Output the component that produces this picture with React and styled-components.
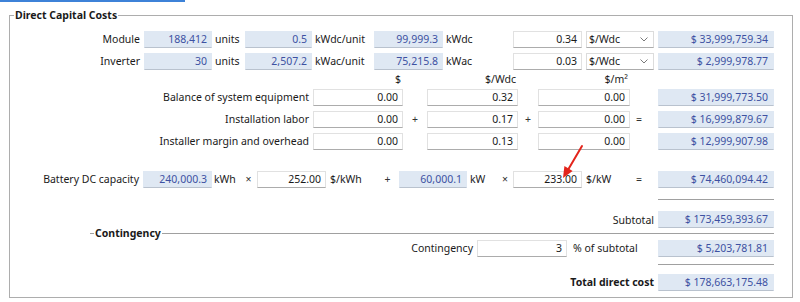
import React from 'react';
import styled, { createGlobalStyle } from 'styled-components';

const Global = createGlobalStyle`
  html, body { margin: 0; padding: 0; background: #fff; }
  body {
    width: 800px; height: 302px; overflow: hidden;
    font-family: "Noto Sans", "Open Sans", sans-serif;
    font-size: 10.5px; color: #1a1a1a;
  }
`;

const Page = styled.div`
  position: relative;
  width: 800px;
  height: 302px;
`;

const TabLine = styled.div`
  width: 185px;
  height: 2px;
  background: #3d82d8;
`;

const Group = styled.fieldset`
  margin: 5px 0 0 9px;
  width: 784px;
  box-sizing: border-box;
  border: 1px solid #adadad;
  padding: 5px 18px 4px 0;
  min-width: 0;
`;

const Legend = styled.legend`
  margin-left: 4px;
  padding: 0 1px;
  font-weight: 700;
  line-height: 16px;
`;

const Body = styled.div`
  display: flex;
  flex-direction: column;
`;

const Row = styled.div`
  display: flex;
  align-items: center;
  height: ${p => p.$h ?? 22}px;
  margin-top: ${p => p.$mt ?? 0}px;
  white-space: nowrap;
`;

const Label = styled.div`
  ${p => (p.$w ? `width: ${p.$w}px; flex: none;` : 'flex: 1;')}
  box-sizing: border-box;
  padding-right: 4px;
  text-align: right;
  font-weight: ${p => (p.$bold ? 700 : 400)};
`;

const Field = styled.div`
  flex: none;
  box-sizing: border-box;
  width: ${p => p.$w}px;
  height: 17px;
  display: flex;
  align-items: center;
  justify-content: flex-end;
  padding-right: 4px;
  line-height: 1;
`;

const Calc = styled(Field)`
  background: #dfe8f3;
  color: #3d51a2;
  border: 1px solid #dfe8f3;
  border-bottom-color: #b9c2ce;
`;

const Result = styled(Calc)`
  margin-left: auto;
  padding-right: 5px;
`;

const Input = styled(Field)`
  background: #fff;
  color: #1a1a1a;
  border: 1px solid #e1e1e1;
  border-bottom-color: #acacac;
`;

const Select = styled.div`
  flex: none;
  box-sizing: border-box;
  width: 68px;
  height: 17px;
  margin-left: 4px;
  display: flex;
  align-items: center;
  justify-content: space-between;
  padding: 0 5px 0 2px;
  background: #fff;
  border: 1px solid #dcdcdc;
  border-bottom-color: #acacac;
`;

const Unit = styled.div`
  flex: none;
  box-sizing: border-box;
  width: ${p => p.$w}px;
  padding-left: ${p => p.$pl ?? 3}px;
`;

const Op = styled.div`
  flex: none;
  width: ${p => p.$w}px;
  text-align: center;
  color: #333;
`;

const Head = styled.div`
  flex: none;
  box-sizing: border-box;
  width: ${p => p.$w}px;
  text-align: right;
  padding-right: 2px;
`;

const Rule = styled.div`
  width: 116px;
  margin-left: auto;
  margin-top: ${p => p.$mt ?? 0}px;
  border-top: 1px solid #a0a0a0;
`;

const SubHeader = styled.div`
  display: flex;
  align-items: center;
  height: 8px;
  margin-left: 80px;
  &::before { content: ''; width: 4px; border-top: 1px solid #a0a0a0; }
  &::after { content: ''; flex: 1; border-top: 1px solid #a0a0a0; }
`;

const SubTitle = styled.span`
  font-weight: 700;
  padding: 0 1px;
  line-height: 14px;
`;

const Arrow = styled.svg`
  position: absolute;
  left: 555px;
  top: 143px;
  overflow: visible;
`;

const Chevron = () => (
  <svg width="8" height="5" viewBox="0 0 8 5">
    <polyline points="0.5,0.5 4,4 7.5,0.5" fill="none" stroke="#7a7a7a" strokeWidth="1" />
  </svg>
);

const ModuleRow = ({ label, count, per, perUnit, total, totalUnit, price, amount }) => (
  <Row>
    <Label $w={134}>{label}</Label>
    <Calc $w={68}>{count}</Calc>
    <Unit $w={33}>units</Unit>
    <Calc $w={67}>{per}</Calc>
    <Unit $w={62}>{perUnit}</Unit>
    <Calc $w={69}>{total}</Calc>
    <Unit $w={70}>{totalUnit}</Unit>
    <Input $w={69}>{price}</Input>
    <Select>
      <span>$/Wdc</span>
      <Chevron />
    </Select>
    <Result $w={116}>{amount}</Result>
  </Row>
);

const BosRow = ({ label, a, b, c, amount, ops }) => (
  <Row>
    <Label $w={303}>{label}</Label>
    <Input $w={90}>{a}</Input>
    <Op $w={24}>{ops ? '+' : ''}</Op>
    <Input $w={91}>{b}</Input>
    <Op $w={20}>{ops ? '+' : ''}</Op>
    <Input $w={92}>{c}</Input>
    <Op $w={18}>{ops ? '=' : ''}</Op>
    <Result $w={116}>{amount}</Result>
  </Row>
);

export default function App() {
  return (
    <Page>
      <Global />
      <TabLine />
      <Group>
        <Legend>Direct Capital Costs</Legend>
        <Body>
          <ModuleRow label="Module" count="188,412" per="0.5" perUnit="kWdc/unit" total="99,999.3" totalUnit="kWdc" price="0.34" amount="$ 33,999,759.34" />
          <ModuleRow label="Inverter" count="30" per="2,507.2" perUnit="kWac/unit" total="75,215.8" totalUnit="kWac" price="0.03" amount="$ 2,999,978.77" />
          <Row $h={14}>
            <Label $w={303} />
            <Head $w={90}>$</Head>
            <Op $w={24} />
            <Head $w={91}>$/Wdc</Head>
            <Op $w={20} />
            <Head $w={92}>$/m²</Head>
          </Row>
          <BosRow label="Balance of system equipment" a="0.00" b="0.32" c="0.00" amount="$ 31,999,773.50" />
          <BosRow label="Installation labor" a="0.00" b="0.17" c="0.00" amount="$ 16,999,879.67" ops />
          <BosRow label="Installer margin and overhead" a="0.00" b="0.13" c="0.00" amount="$ 12,999,907.98" />
          <Row $mt={16}>
            <Label $w={133}>Battery DC capacity</Label>
            <Calc $w={69}>240,000.3</Calc>
            <Unit $w={28} $pl={2}>kWh</Unit>
            <Op $w={17}>×</Op>
            <Input $w={69}>252.00</Input>
            <Unit $w={50} $pl={4}>$/kWh</Unit>
            <Op $w={23}>+</Op>
            <Calc $w={68}>60,000.1</Calc>
            <Unit $w={30}>kW</Unit>
            <Op $w={16}>×</Op>
            <Input $w={69}>233.00</Input>
            <Unit $w={48} $pl={4}>$/kW</Unit>
            <Op $w={18}>=</Op>
            <Result $w={116}>$ 74,460,094.42</Result>
          </Row>
          <Rule $mt={9} />
          <Row $mt={10} $h={19}>
            <Label>Subtotal</Label>
            <Result $w={116}>$ 173,459,393.67</Result>
          </Row>
          <SubHeader>
            <SubTitle>Contingency</SubTitle>
          </SubHeader>
          <Row>
            <Label $w={467}>Contingency</Label>
            <Input $w={90}>3</Input>
            <Unit $w={91} $pl={6}>% of subtotal</Unit>
            <Result $w={116}>$ 5,203,781.81</Result>
          </Row>
          <Rule $mt={5} />
          <Row $mt={6}>
            <Label $bold>Total direct cost</Label>
            <Result $w={116}>$ 178,663,175.48</Result>
          </Row>
        </Body>
      </Group>
      <Arrow width="32" height="40" viewBox="0 0 32 40">
        <line x1="27" y1="3" x2="13.5" y2="26" stroke="#e3241b" strokeWidth="2" strokeLinecap="round" />
        <polygon points="8,35 17.6,28 9.4,23" fill="#e3241b" />
      </Arrow>
    </Page>
  );
}
